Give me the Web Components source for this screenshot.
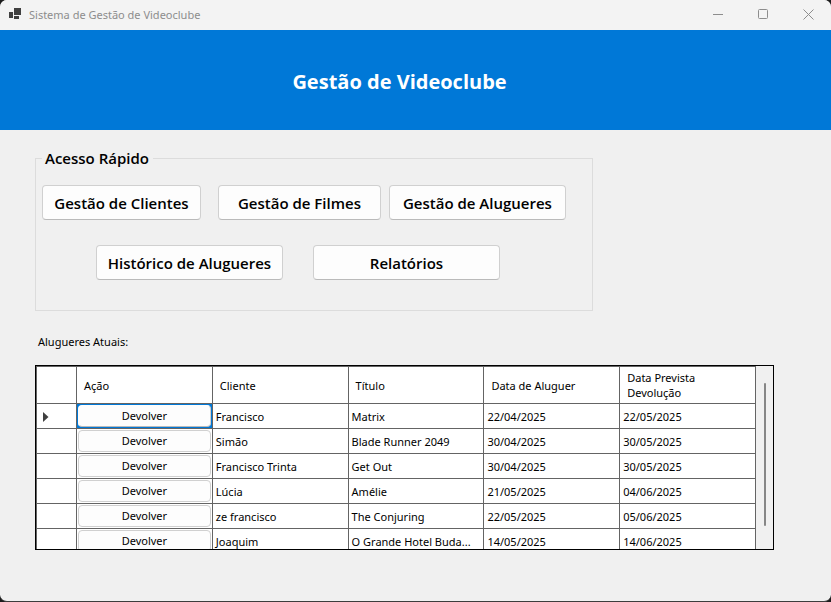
<!DOCTYPE html>
<html lang="pt">
<head>
<meta charset="utf-8">
<title>Sistema de Gestão de Videoclube</title>
<style>
html, body { margin: 0; height: 100%; background: #1c1c1c; }
body { font: 11px/15px "Noto Sans", "Open Sans", sans-serif; color: #000; }
</style>
</head>
<body>
<app-window>
  <window-titlebar slot="titlebar">Sistema de Gestão de Videoclube</window-titlebar>
  <page-banner slot="banner">Gestão de Videoclube</page-banner>
  <quick-access label="Acesso Rápido">
    <action-button slot="primary">Gestão de Clientes</action-button>
    <action-button slot="primary">Gestão de Filmes</action-button>
    <action-button slot="primary">Gestão de Alugueres</action-button>
    <action-button slot="secondary">Histórico de Alugueres</action-button>
    <action-button slot="secondary">Relatórios</action-button>
  </quick-access>
  <rentals-grid label="Alugueres Atuais:"></rentals-grid>
</app-window>
<script>
class BaseElement extends HTMLElement {
  connectedCallback() {
    if (!this.shadowRoot) this.attachShadow({ mode: "open" }).innerHTML = this.render();
  }
}

customElements.define("app-window", class extends BaseElement {
  render() {
    return `<style>
      :host { display: flex; flex-direction: column; box-sizing: border-box; height: 100vh; overflow: hidden;
        background: #f0f0f0; border-bottom: 1px solid #3c3c3c; border-radius: 7px; }
      main { flex: 1; min-height: 0; display: flex; flex-direction: column; padding: 17px 57px 51px 35px; }
    </style>
    <slot name="titlebar"></slot><slot name="banner"></slot><main><slot></slot></main>`;
  }
});

customElements.define("window-titlebar", class extends BaseElement {
  render() {
    return `<style>
      :host { display: flex; align-items: center; box-sizing: border-box; height: 30px; padding-bottom: 2px; background: #f3f3f3; color: #8d8d8d; flex: none; }
      .logo { margin: 0 8px 0 9px; }
      .title { flex: 1; }
      button { width: 45px; height: 28px; padding: 0; border: 0; background: none; color: inherit; display: grid; place-items: center; }
      svg { display: block; }
    </style>
    <svg class="logo" width="12" height="12" viewBox="0 0 12 12" fill="#404040" shape-rendering="crispEdges" aria-hidden="true">
      <path d="M5 0h7v7H5zM0 4h4v6H0zM5 8h5v3H5z"/></svg>
    <span class="title"><slot></slot></span>
    <button aria-label="Minimizar"><svg width="11" height="11" viewBox="0 0 11 11"><path d="M0 5.5h10" stroke="currentColor"/></svg></button>
    <button aria-label="Maximizar"><svg width="11" height="11" viewBox="0 0 11 11"><rect x=".5" y=".5" width="9" height="9" rx="1" fill="none" stroke="currentColor"/></svg></button>
    <button aria-label="Fechar"><svg width="11" height="11" viewBox="0 0 11 11"><path d="M.5.5l10 10M10.500.5l-10 10" stroke="currentColor"/></svg></button>`;
  }
});

customElements.define("page-banner", class extends BaseElement {
  render() {
    return `<style>
      :host { display: flex; align-items: center; justify-content: center; box-sizing: border-box; height: 100px; flex: none;
        padding: 3px 32px 0 0; background: #0078d7; color: #fff; }
      h1 { margin: 0; font: 700 20px/28px "Open Sans", "Noto Sans", sans-serif; }
    </style><h1><slot></slot></h1>`;
  }
});

customElements.define("action-button", class extends BaseElement {
  render() {
    return `<style>
      :host { display: block; }
      button { box-sizing: border-box; width: 100%; height: 35px; padding: 0; border: 1px solid #d0d0d0; border-bottom-color: #bababa;
        border-radius: 4px; background: #fdfdfd; color: #000; font: 600 15px/22px "Open Sans", "Noto Sans", sans-serif; white-space: nowrap; }
    </style><button type="button"><slot></slot></button>`;
  }
});

customElements.define("quick-access", class extends BaseElement {
  render() {
    return `<style>
      :host { display: block; flex: none; width: 75.5%; }
      fieldset { margin: 0; border: 1px solid #dcdcdc; padding: 15px 26px 30px 6px; min-width: 0; }
      legend { padding: 0 4px 0 3px; font: 600 15px/23px "Open Sans", "Noto Sans", sans-serif; }
      .primary { display: grid; grid-template-columns: 159fr 17px 163fr 8px 177fr; }
      ::slotted(:nth-child(1)) { grid-column: 1; }
      ::slotted(:nth-child(2)) { grid-column: 3; }
      ::slotted(:nth-child(3)) { grid-column: 5; }
      .secondary { display: grid; grid-template-columns: 1fr 1fr; gap: 30px; margin-top: 25px; padding: 0 66px 0 54px; }
      .secondary ::slotted(*) { grid-column: auto; }
    </style>
    <fieldset><legend>${this.getAttribute("label")}</legend>
      <div class="primary"><slot name="primary"></slot></div>
      <div class="secondary"><slot name="secondary"></slot></div>
    </fieldset>`;
  }
});

const rentals = [
  ["Francisco", "Matrix", "22/04/2025", "22/05/2025"],
  ["Simão", "Blade Runner 2049", "30/04/2025", "30/05/2025"],
  ["Francisco Trinta", "Get Out", "30/04/2025", "30/05/2025"],
  ["Lúcia", "Amélie", "21/05/2025", "04/06/2025"],
  ["ze francisco", "The Conjuring", "22/05/2025", "05/06/2025"],
  ["Joaquim", "O Grande Hotel Buda...", "14/05/2025", "14/06/2025"]
];

customElements.define("rentals-grid", class extends BaseElement {
  render() {
    const rows = rentals.map((r, i) => `<tr${i ? "" : ' class="current"'}>
      <th scope="row">${i ? "" : '<svg width="6" height="10" viewBox="0 0 6 10" aria-label="Linha atual"><path d="M0 0l5.500 5L0 10z" fill="#404040"/></svg>'}</th>
      <td class="action"><button type="button">Devolver</button></td>${r.map(c => `<td>${c}</td>`).join("")}</tr>`).join("");
    return `<style>
      :host { display: flex; flex-direction: column; flex: 1; min-height: 0; }
      h2 { margin: 23px 0 15px; padding-left: 3px; font-size: inherit; line-height: 16px; font-weight: 400; }
      .frame { flex: 1; min-height: 0; display: flex; overflow: hidden; border: 1px solid #000; }
      .view { flex: 1; min-width: 0; overflow: hidden; }
      table { width: 100%; table-layout: fixed; border-collapse: separate; border-spacing: 0; background: #fff; }
      th, td { box-sizing: border-box; height: 25px; padding: 0 3px; border: solid #646464; border-width: 0 1px 1px 0;
        text-align: left; font-weight: 400; white-space: nowrap; }
      thead th, thead td { height: 38px; border-top-width: 1px; padding: 0 7px; white-space: normal; }
      tr > :first-child { width: 41px; border-left-width: 1px; padding: 2px 6px 0; }
      .action { padding: 1px; }
      .action button { display: block; box-sizing: border-box; width: 100%; height: 22px; padding: 0 0 1px; border: 1px solid #d0d0d0;
        border-radius: 4px; background: #fdfdfd; color: #000; font: inherit; }
      .current .action { background: #0078d7; }
      .current button { border-color: #fdfdfd #d0d0d0 #bababa #fdfdfd; }
      svg { display: block; }
      .scroll { width: 17px; padding: 17px 0 23px; box-sizing: border-box; display: flex; justify-content: center; }
      .thumb { width: 2px; border-radius: 1px; background: #868686; }
    </style>
    <h2 id="caption">${this.getAttribute("label")}</h2>
    <div class="frame"><div class="view"><table aria-labelledby="caption">
      <thead><tr><td></td><th scope="col">Ação</th><th scope="col">Cliente</th><th scope="col">Título</th><th scope="col">Data de Aluguer</th><th scope="col">Data Prevista Devolução</th></tr></thead>
      <tbody>${rows}</tbody></table></div>
      <div class="scroll"><div class="thumb"></div></div></div>`;
  }
});
</script>
</body>
</html>
